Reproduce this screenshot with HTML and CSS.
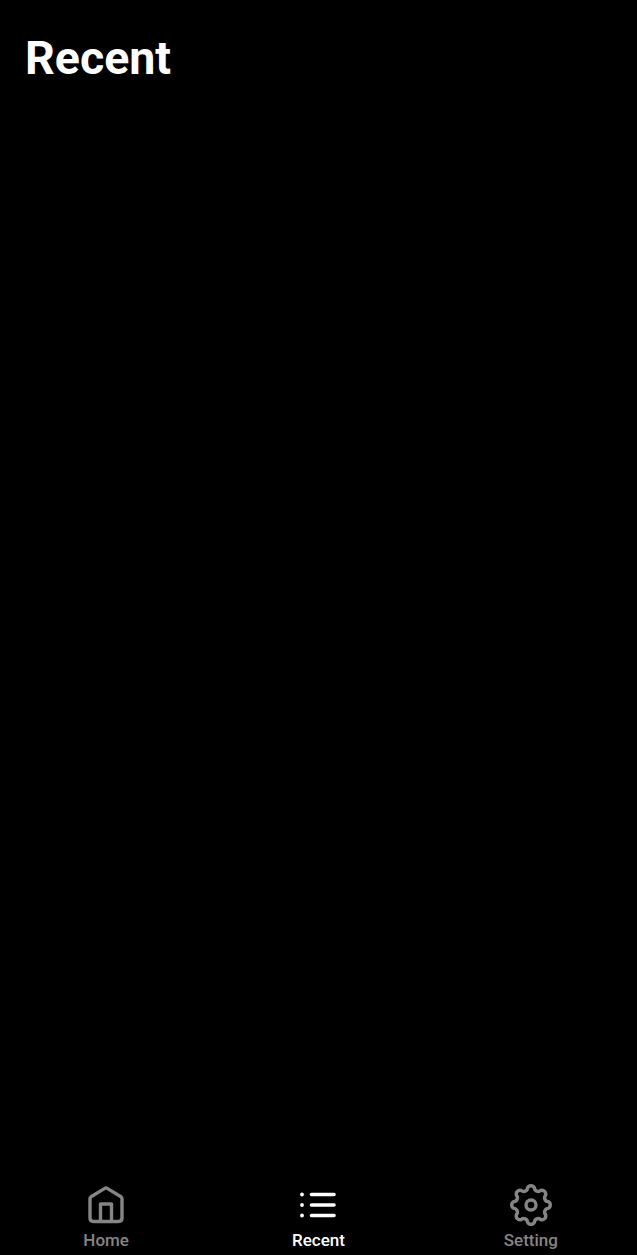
FILE: index.html
```html
<!DOCTYPE html>
<html lang="en">
<head>
  <meta charset="UTF-8">
  <meta name="viewport" content="width=device-width, initial-scale=1.0">
  <title>Recent</title>
  <link rel="stylesheet" href="styles.css">
</head>
<body>

  <!-- Page title -->
  <header class="page-header">
    <h1>Recent</h1>
  </header>

  <!-- Empty list area -->
  <main class="content"></main>

  <!-- Bottom Navigation -->
  <nav class="tab-bar">
    <a class="tab">
      <svg class="tab-icon" viewBox="-22 -22 44 44" fill="none" stroke="currentColor" stroke-width="3.4" stroke-linejoin="round">
        <path d="M-16 -6.5 Q-16 -7.5 -15 -8.2 L-1.2 -16.6 Q0 -17.3 1.2 -16.6 L15 -8.2 Q16 -7.5 16 -6.5 V13 Q16 16.5 12.5 16.5 H-12.5 Q-16 16.5 -16 13 Z"/>
        <path d="M-5.5 16.5 V-1 H5.5 V16.5"/>
      </svg>
      <span class="tab-label">Home</span>
    </a>
    <a class="tab active">
      <svg class="tab-icon" viewBox="-22 -22 44 44" fill="none" stroke="currentColor" stroke-width="3.6" stroke-linecap="round">
        <path d="M-6.5 -10.5 H16 M-6.5 0 H16 M-6.5 10.5 H16"/>
        <circle cx="-16" cy="-10.5" r="1.9" fill="currentColor" stroke="none"/>
        <circle cx="-16" cy="0" r="1.9" fill="currentColor" stroke="none"/>
        <circle cx="-16" cy="10.5" r="1.9" fill="currentColor" stroke="none"/>
      </svg>
      <span class="tab-label">Recent</span>
    </a>
    <a class="tab">
      <svg class="tab-icon" viewBox="-22 -22 44 44" fill="none" stroke="currentColor" stroke-width="3.4" stroke-linejoin="round">
        <path d="M17.16 -3.41 A3.8 3.8 0 0 1 17.16 3.41 A3.8 3.8 0 0 0 14.55 9.72 A3.8 3.8 0 0 1 9.72 14.55 A3.8 3.8 0 0 0 3.41 17.16 A3.8 3.8 0 0 1 -3.41 17.16 A3.8 3.8 0 0 0 -9.72 14.55 A3.8 3.8 0 0 1 -14.55 9.72 A3.8 3.8 0 0 0 -17.16 3.41 A3.8 3.8 0 0 1 -17.16 -3.41 A3.8 3.8 0 0 0 -14.55 -9.72 A3.8 3.8 0 0 1 -9.72 -14.55 A3.8 3.8 0 0 0 -3.41 -17.16 A3.8 3.8 0 0 1 3.41 -17.16 A3.8 3.8 0 0 0 9.72 -14.55 A3.8 3.8 0 0 1 14.55 -9.72 A3.8 3.8 0 0 0 17.16 -3.41 Z"/>
        <circle cx="0" cy="0" r="5"/>
      </svg>
      <span class="tab-label">Setting</span>
    </a>
  </nav>

</body>
</html>
```

FILE: styles.css
```css
/* General Styles */
body {
  font-family: 'Roboto', sans-serif;
  background-color: #000;
  color: #fff;
  margin: 0;
  padding: 0;
  display: flex;
  flex-direction: column;
  height: 100vh;
  overflow: hidden;
}

.page-header {
  padding: 32px 25px 0;
}

h1 {
  margin: 0;
  font-size: 46.5px;
  font-weight: 700;
  line-height: 52px;
}

.content {
  flex: 1;
}

/* Bottom Navigation */
.tab-bar {
  display: grid;
  grid-template-columns: repeat(3, 1fr);
  padding-bottom: 5px;
}

.tab {
  display: flex;
  flex-direction: column;
  align-items: center;
  color: #858585;
}

.tab.active {
  color: #fff;
}

.tab-icon {
  width: 44px;
  height: 44px;
}

.tab-label {
  font-size: 17px;
  font-weight: 500;
  line-height: 20px;
  margin-top: 3px;
}
```
